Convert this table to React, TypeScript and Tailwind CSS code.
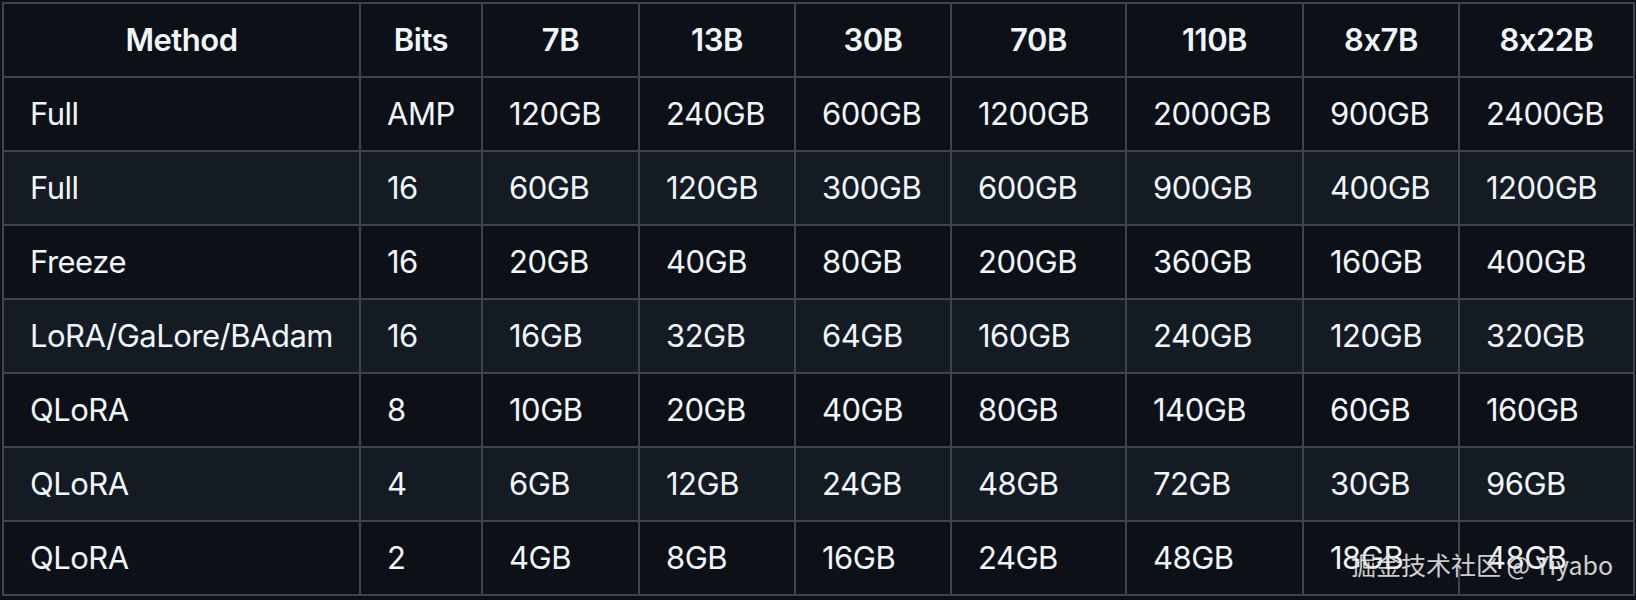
import React from 'react';

const headers = ['Method', 'Bits', '7B', '13B', '30B', '70B', '110B', '8x7B', '8x22B'];
const widths = ['w-[357px]', 'w-[122px]', 'w-[157px]', 'w-[156px]', 'w-[156px]', 'w-[175px]', 'w-[177px]', 'w-[156px]', 'w-[175px]'];

const rows: string[][] = [
  ['Full', 'AMP', '120GB', '240GB', '600GB', '1200GB', '2000GB', '900GB', '2400GB'],
  ['Full', '16', '60GB', '120GB', '300GB', '600GB', '900GB', '400GB', '1200GB'],
  ['Freeze', '16', '20GB', '40GB', '80GB', '200GB', '360GB', '160GB', '400GB'],
  ['LoRA/GaLore/BAdam', '16', '16GB', '32GB', '64GB', '160GB', '240GB', '120GB', '320GB'],
  ['QLoRA', '8', '10GB', '20GB', '40GB', '80GB', '140GB', '60GB', '160GB'],
  ['QLoRA', '4', '6GB', '12GB', '24GB', '48GB', '72GB', '30GB', '96GB'],
  ['QLoRA', '2', '4GB', '8GB', '16GB', '24GB', '48GB', '18GB', '48GB'],
];

const App: React.FC = () => {
  return (
    <div
      className="relative min-h-screen bg-[#0d1117] pl-[2px] pt-[2px] text-[#f0f6fc] [font-feature-settings:'calt'_0]"
      style={{ fontFamily: 'Inter, "Noto Sans", sans-serif' }}
    >
      <table className="w-[1633px] table-fixed border-collapse text-[31px] leading-[48px] tracking-[-0.5px]">
        <thead>
          <tr className="bg-[#0d1117]">
            {headers.map((h, i) => (
              <th
                key={h}
                className={`${widths[i]} border-2 border-[#3d444d] px-[26px] py-[12px] text-center font-semibold`}
              >
                {h}
              </th>
            ))}
          </tr>
        </thead>
        <tbody>
          {rows.map((row, r) => (
            <tr key={r} className={r % 2 === 1 ? 'bg-[#151b23]' : 'bg-[#0d1117]'}>
              {row.map((cell, c) => (
                <td key={c} className="border-2 border-[#3d444d] px-[26px] py-[12px] text-left whitespace-nowrap">
                  {cell}
                </td>
              ))}
            </tr>
          ))}
        </tbody>
      </table>

      {/* watermark */}
      <div
        className="pointer-events-none absolute left-[1351px] top-[544px] whitespace-nowrap text-[25px] leading-[40px] text-white/80"
        style={{ fontFamily: '"Noto Sans CJK SC", "Noto Sans", sans-serif', textShadow: '0 0 2px rgba(0,0,0,0.4)' }}
      >
        掘金技术社区 @ Yiyabo
      </div>
    </div>
  );
};

export default App;
